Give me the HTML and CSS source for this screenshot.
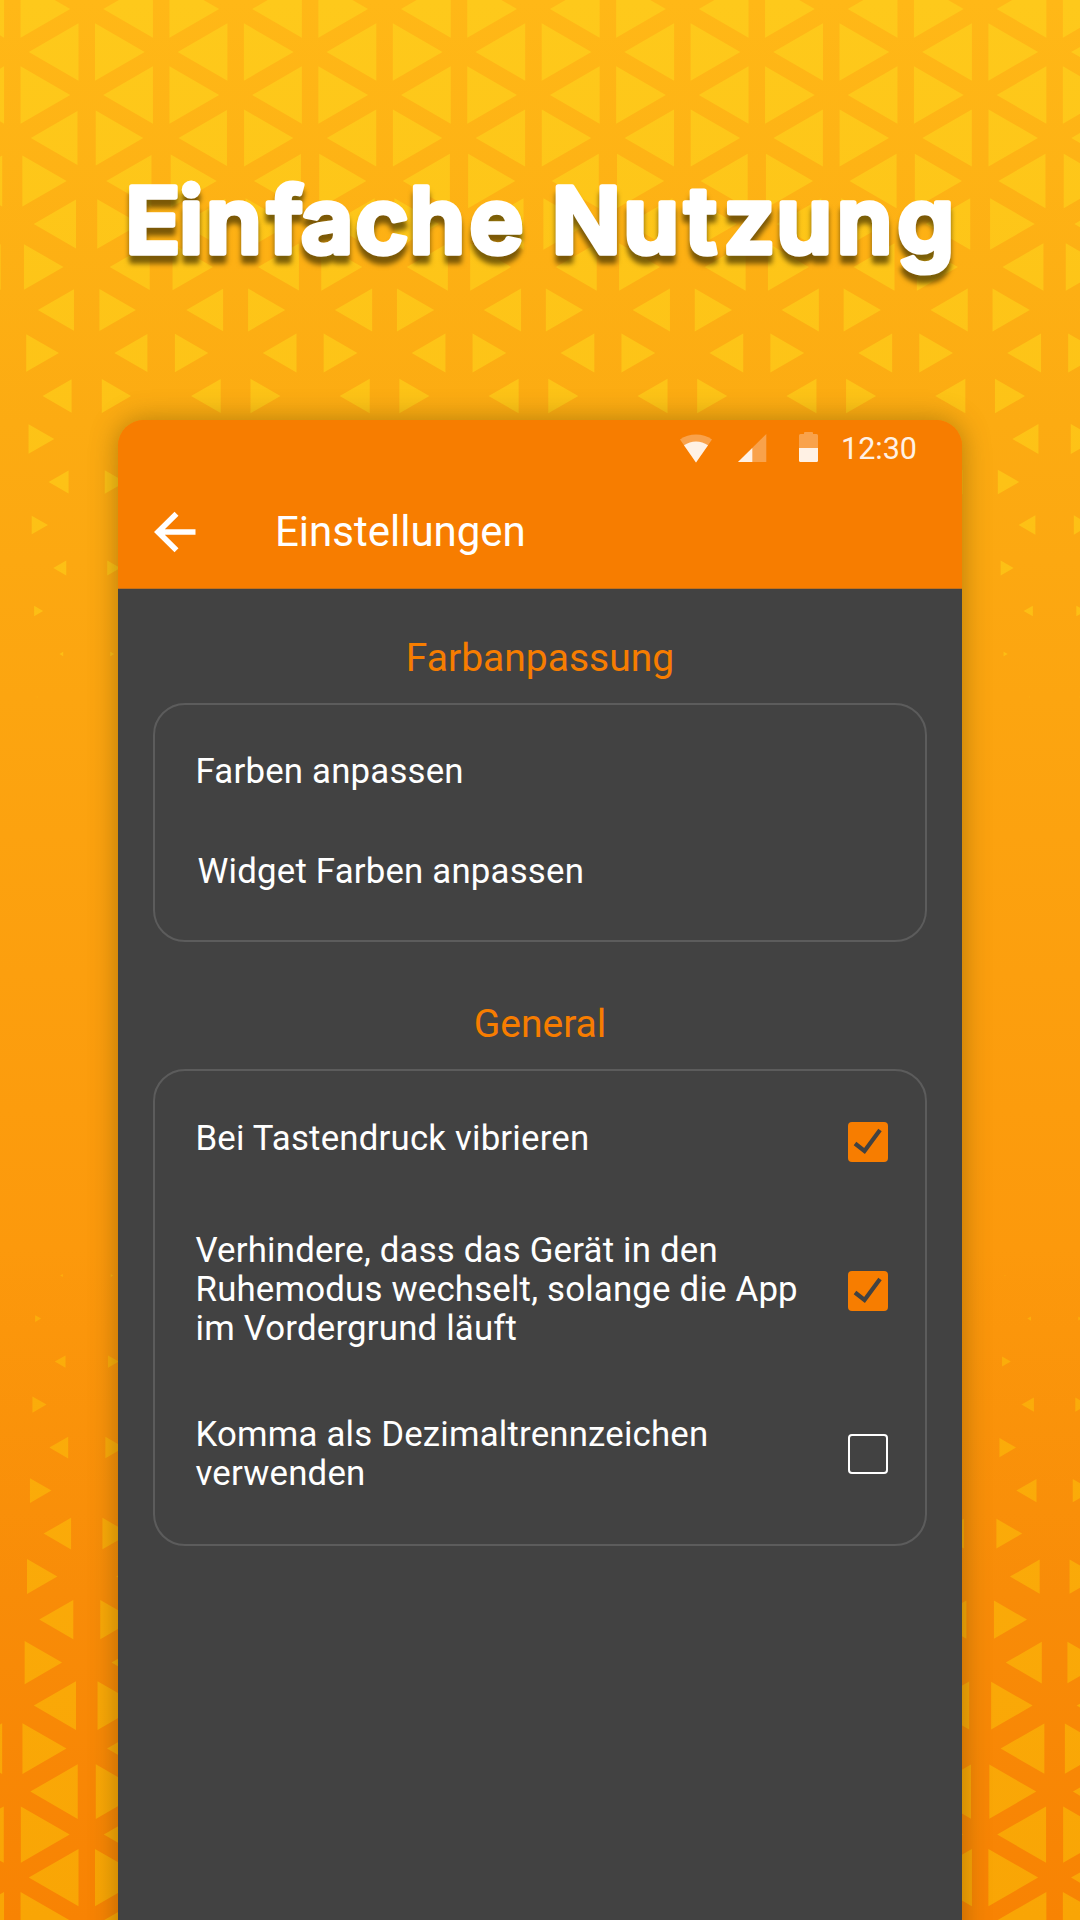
FILE: index.html
```html
<!DOCTYPE html>
<html lang="de">
<head>
<meta charset="utf-8">
<title>Einfache Nutzung</title>
<link rel="stylesheet" href="styles.css">
</head>
<body>
<main class="poster">
  <svg class="pattern" id="pattern" viewBox="0 0 1080 1920" aria-hidden="true">
    <defs>
      <linearGradient id="tri" gradientUnits="userSpaceOnUse" x1="0" y1="0" x2="0" y2="1920">
        <stop offset="0" stop-color="#fec91b"/>
        <stop offset="0.25" stop-color="#fdc216"/>
        <stop offset="0.72" stop-color="#fbac0a"/>
        <stop offset="1" stop-color="#f9a505"/>
      </linearGradient>
    </defs>
  </svg>
  <h1 class="headline">
    <svg class="headline-art" width="1080" height="160" viewBox="0 0 1080 160">
      <text y="103.2" x="125.3 179.3 206 267.5 301 355.5 409.5 469.5">Einfache</text>
      <text y="103.2" x="551.8 623.2 684.4 723.5 776.2 836.7 897.2">Nutzung</text>
    </svg>
  </h1>
  <section class="phone">
    <header class="top">
      <div class="status">
        <svg class="wifi" width="32" height="29" viewBox="0 0 32 29">
          <path d="M0 5.4C9-1.3 23-1.3 32 5.4L16 28.6Z" opacity=".33"/>
          <path d="M4 11.3C11 6.2 21 6.2 28 11.3L16 28.6Z"/>
        </svg>
        <svg class="signal" width="29" height="28" viewBox="0 0 29 28">
          <path d="M28.3 0V28H0Z" opacity=".33"/>
          <path d="M14.3 14V28H0Z"/>
        </svg>
        <svg class="battery" width="19" height="30" viewBox="0 0 19 30">
          <path d="M0 16V3.5Q0 2 1.5 2H5V1Q5 0 6 0H13Q14 0 14 1V2H17.5Q19 2 19 3.5V16Z" opacity=".33"/>
          <path d="M0 16H19V28.5Q19 30 17.5 30H1.5Q0 30 0 28.5Z"/>
        </svg>
        <span class="clock">12:30</span>
      </div>
      <div class="appbar">
        <svg class="back" width="42" height="42" viewBox="0 0 42 42">
          <path d="M22.5 2.7L4 21L22.5 39.3M4 21H41.5" fill="none" stroke="#fff" stroke-width="5.6"/>
        </svg>
        <h2 class="appbar-title">Einstellungen</h2>
      </div>
    </header>
    <div class="content">
      <h3 class="section-title">Farbanpassung</h3>
      <div class="card colors">
        <div class="row">Farben anpassen</div>
        <div class="row widget">Widget Farben anpassen</div>
      </div>
      <h3 class="section-title">General</h3>
      <div class="card general">
        <div class="row option vibrate">
          <span class="label">Bei Tastendruck vibrieren</span>
          <span class="box on"><svg width="40" height="40" viewBox="0 0 40 40"><path d="M7 21.5L16.5 29L32 8"/></svg></span>
        </div>
        <div class="row option awake">
          <span class="label">Verhindere, dass das Gerät in den<br>Ruhemodus wechselt, solange die App<br>im Vordergrund läuft</span>
          <span class="box on"><svg width="40" height="40" viewBox="0 0 40 40"><path d="M7 21.5L16.5 29L32 8"/></svg></span>
        </div>
        <div class="row option comma">
          <span class="label">Komma als Dezimaltrennzeichen<br>verwenden</span>
          <span class="box"></span>
        </div>
      </div>
    </div>
  </section>
</main>
<script src="pattern.js"></script>
</body>
</html>
```

FILE: styles.css
```css
* { box-sizing: border-box; }

body {
  margin: 0;
  font-family: Roboto, "Liberation Sans", sans-serif;
  color: #fff;
}

.poster {
  position: relative;
  width: 1080px;
  height: 1920px;
  overflow: hidden;
  display: flex;
  flex-direction: column;
  align-items: center;
  background: linear-gradient(#ffb817 0%, #fcab12 22%, #fc990c 65%, #f88c08 83%, #f88303 100%);
}

.pattern {
  position: absolute;
  inset: 0;
  width: 1080px;
  height: 1920px;
}

.headline {
  position: relative;
  margin: 0;
  padding-top: 150px;
  height: 420px;
  flex: none;
}

.headline-art {
  display: block;
  overflow: visible;
  font-family: Inter, "Open Sans", sans-serif;
  font-size: 91px;
  font-weight: 600;
  fill: #fff;
  stroke: #fff;
  stroke-width: 5.5px;
  stroke-linejoin: round;
  filter: drop-shadow(0 8px 2.5px rgba(60, 45, 0, .68));
}

.phone {
  position: relative;
  width: 844px;
  height: 1540px;
  flex: none;
  overflow: hidden;
  border-radius: 26px 26px 0 0;
  background: linear-gradient(#f77d00 160px, #424242 160px);
  box-shadow: 0 0 28px rgba(80, 65, 0, .42);
}

.top {
  height: 169px;
  border-bottom: 1px solid #c5701a;
  background: #f77d00;
}

.status {
  display: flex;
  align-items: flex-start;
  padding: 12px 0 0 562px;
  height: 60px;
  fill: #fff1e4;
}

.wifi { margin-top: 2px; }
.signal { margin: 2px 0 0 26px; }
.battery { margin-left: 32px; }

.clock {
  margin-left: 23px;
  font-size: 30.5px;
  line-height: 33px;
  color: #fff1e4;
}

.appbar {
  display: flex;
  align-items: center;
  padding: 0 36px;
  height: 104px;
}

.appbar-title {
  margin: 0 0 0 79px;
  font-size: 42px;
  font-weight: 400;
  line-height: 50px;
}

.content { padding: 45px 35px 0; }

.section-title {
  margin: 0 0 21px;
  height: 48px;
  font-size: 39px;
  font-weight: 400;
  line-height: 48px;
  text-align: center;
  color: #f77d00;
}

.card {
  display: flex;
  flex-direction: column;
  border: 2px solid #5c5c5c;
  border-radius: 32px;
}

.row {
  font-size: 34.8px;
  line-height: 39px;
  letter-spacing: .19px;
}

.colors {
  height: 239px;
  margin-bottom: 58px;
  padding: 47px 40.5px 0;
  gap: 61px;
}

.widget { padding-left: 2px; }

.general {
  height: 477px;
  padding: 48px 37px 0 40.5px;
}

.option {
  display: flex;
  justify-content: space-between;
  align-items: flex-start;
}

.vibrate { height: 40px; }
.awake { margin-top: 72px; }
.comma { margin-top: 67px; }

.box {
  width: 40px;
  height: 40px;
  flex: none;
  border-radius: 4px;
  border: 2px solid #fff;
}

.vibrate .box { margin-top: 3px; }
.awake .box { margin-top: 40px; }
.comma .box { margin-top: 19px; }

.box.on {
  border: 0;
  background: #f77d00;
}

.box svg {
  display: block;
  fill: none;
  stroke: #424242;
  stroke-width: 4.2px;
}
```

FILE: pattern.js
```js
// Triangle lattice that fades out towards the middle of the poster.
const COLUMN = 74.45;
const ROW = 43;
const bands = [
  { y: 9, phase: 0, left: [.667, .667, .667, .624, .593, .566, .53, .484, .438, .388, .345, .267, .217, .174, .12, .05, .01],
    right: [.667, .667, .667, .663, .632, .6, .55, .5, .453, .403, .349, .287, .225, .174, .124, .055, .01], reach: 250 },
  { y: 1275.6, phase: 1, left: [.035, .08, .144, .189, .253, .288, .368, .407, .457, .502, .566, .591, .636, .656, .668, .667],
    right: [.01, .045, .114, .164, .219, .268, .343, .397, .442, .482, .556, .586, .63, .656, .668, .667], reach: 1080 }
];
let d = "";
for (const band of bands) {
  band.left.forEach((leftScale, i) => {
    const y = band.y + i * ROW;
    const odd = (i + band.phase) % 2;
    for (let n = -2; n < 15; n++) {
      const x0 = 12.3 + n * COLUMN;
      const pointsRight = Math.abs(n + odd) % 2 === 0;
      const t = Math.min(1, Math.max(0, x0 / band.reach));
      const s = leftScale + (band.right[i] - leftScale) * t;
      const near = COLUMN * (1 - s) / 3;
      const far = COLUMN - 2 * near;
      const base = pointsRight ? x0 + near : x0 + COLUMN - near;
      const tip = pointsRight ? x0 + far : x0 + COLUMN - far;
      const h = ROW * s;
      d += `M${base.toFixed(2)} ${(y - h).toFixed(2)}L${tip.toFixed(2)} ${y.toFixed(2)}L${base.toFixed(2)} ${(y + h).toFixed(2)}Z`;
    }
  });
}
const path = document.createElementNS("http://www.w3.org/2000/svg", "path");
path.setAttribute("d", d);
path.setAttribute("fill", "url(#tri)");
document.getElementById("pattern").appendChild(path);
```
